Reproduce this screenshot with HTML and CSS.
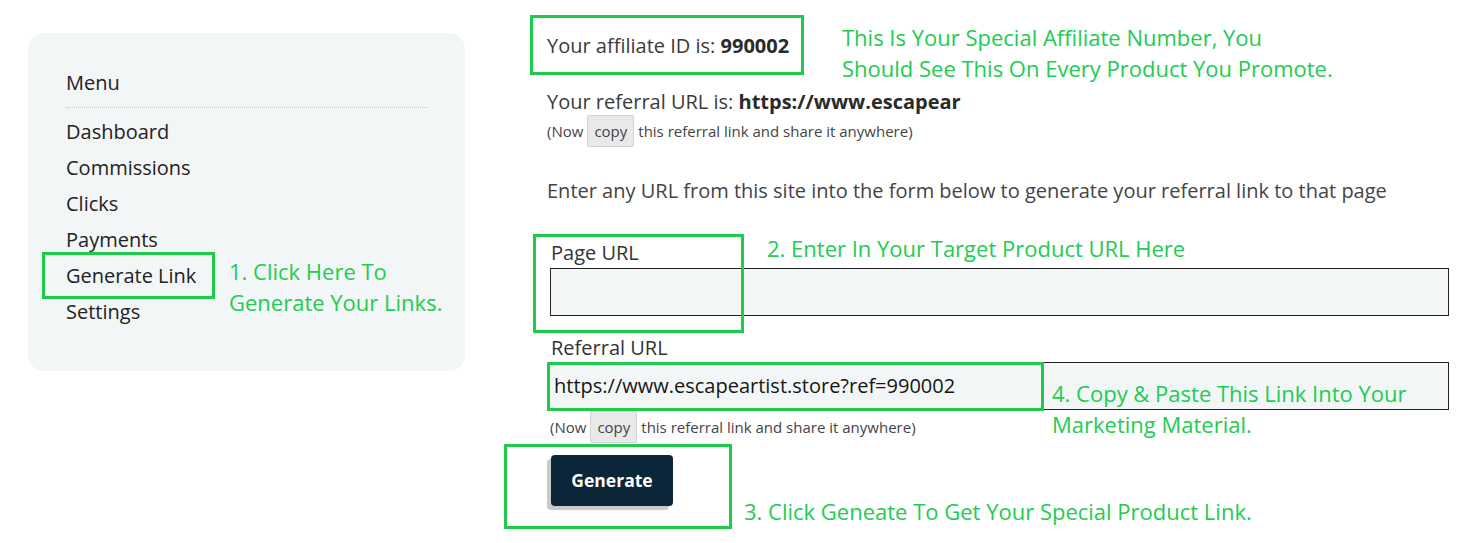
FILE: index.html
```html
<!DOCTYPE html>
<html lang="en">
<head>
<meta charset="utf-8">
<title>Affiliate Area - Generate Link</title>
<link rel="stylesheet" href="styles.css">
</head>
<body>
<div class="page">
  <aside class="sidebar">
    <div class="menu-title">Menu</div>
    <nav class="menu">
      <a class="menu-item">Dashboard</a>
      <a class="menu-item">Commissions</a>
      <a class="menu-item">Clicks</a>
      <a class="menu-item">Payments</a>
      <a class="menu-item">Generate Link</a>
      <a class="menu-item">Settings</a>
    </nav>
  </aside>

  <main class="content">
    <p class="line aff-id">Your affiliate ID is: <strong>990002</strong></p>
    <p class="line ref-url">Your referral URL is: <strong>https://www.escapear</strong></p>
    <p class="note"><span>(Now</span><button class="copy">copy</button><span>this referral link and share it anywhere)</span></p>
    <p class="line intro">Enter any URL from this site into the form below to generate your referral link to that page</p>

    <div class="field page-field">
      <label class="field-label">Page URL</label>
      <div class="input"></div>
    </div>

    <div class="field ref-field">
      <label class="field-label">Referral URL</label>
      <div class="input filled">https://www.escapeartist.store?ref=990002</div>
      <p class="note note-small"><span>(Now</span><button class="copy">copy</button><span>this referral link and share it anywhere)</span></p>
    </div>

    <button class="generate">Generate</button>
  </main>

  <div class="frame f-link"></div>
  <div class="frame f-id"></div>
  <div class="frame f-page"></div>
  <div class="frame f-ref"></div>
  <div class="frame f-gen"></div>

  <div class="ann a1">1. Click Here To<br>Generate Your Links.</div>
  <div class="ann a-top">This Is Your Special Affiliate Number, You<br>Should See This On Every Product You Promote.</div>
  <div class="ann a2">2. Enter In Your Target Product URL Here</div>
  <div class="ann a4">4. Copy &amp; Paste This Link Into Your<br>Marketing Material.</div>
  <div class="ann a3">3. Click Geneate To Get Your Special Product Link.</div>
</div>
</body>
</html>
```

FILE: styles.css
```css
* { box-sizing: border-box; }

html, body {
  margin: 0;
  padding: 0;
  background: #ffffff;
}

body {
  font-family: "Open Sans", "Noto Sans", sans-serif;
  color: #333333;
}

.page {
  position: relative;
  display: flex;
  align-items: flex-start;
  gap: 82px;
  padding: 33px 0 0 28px;
  height: 543px;
  overflow: hidden;
}

/* Sidebar */
.sidebar {
  flex: 0 0 437px;
  height: 338px;
  background: #f3f6f7;
  border-radius: 16px;
  padding: 38px 38px 0 38px;
}

.menu-title {
  font-size: 20px;
  line-height: 24px;
  color: #222;
  padding-bottom: 12px;
  border-bottom: 1px dotted #c4c4c4;
}

.menu {
  display: flex;
  flex-direction: column;
  margin-top: 6px;
}

.menu-item {
  font-size: 20px;
  line-height: 36px;
  color: #222;
  text-decoration: none;
}

/* Main content */
.content {
  flex: 0 0 902px;
  display: flex;
  flex-direction: column;
  align-items: flex-start;
  padding-top: 0;
}

.line {
  margin: 0;
  font-size: 20px;
  line-height: 27px;
  color: #3a3a3a;
}

.line strong { font-weight: 700; color: #2a2a2a; }

.aff-id { margin-top: -1px; }
.ref-url { margin-top: 29px; }

.note {
  margin: 0;
  display: flex;
  align-items: center;
  gap: 4px;
  font-size: 15px;
  height: 32px;
  color: #444;
}

.copy {
  font-family: "Open Sans", "Noto Sans", sans-serif;
  font-size: 15px;
  color: #444;
  background: #e9e9e9;
  border: 1px solid #d2d2d2;
  border-radius: 2px;
  height: 32px;
  padding: 0 6px;
  margin: 0;
}

.intro { margin-top: 30px; color: #444; }

.field {
  width: 100%;
  display: flex;
  flex-direction: column;
}

.page-field { margin-top: 35px; padding-left: 3px; }
.ref-field { margin-top: 18.5px; padding-left: 1px; }

.field-label {
  font-size: 20px;
  line-height: 27px;
  color: #333;
  padding-left: 1px;
}

.ref-field .field-label { padding-left: 3px; }

.input {
  margin-top: 1.5px;
  width: 100%;
  height: 48px;
  border: 1px solid #222;
  background: #f3f6f7;
  font-size: 20px;
  line-height: 46px;
  color: #151515;
  padding-left: 5px;
}

.ref-field .input { margin-top: 0.5px; }

.note-small { margin-top: 1px; padding-left: 2px; }

.generate {
  margin-top: 12px;
  margin-left: 4px;
  width: 122px;
  height: 51px;
  border: none;
  border-radius: 4px;
  background: #0b2539;
  color: #fff;
  font-family: "Open Sans", "Noto Sans", sans-serif;
  font-weight: 700;
  font-size: 17.5px;
  box-shadow: -4px 4px 1px #c9c9c9;
}

/* Annotation overlays */
.frame {
  position: absolute;
  border: 3px solid #1ecb4b;
  pointer-events: none;
}

.f-link { left: 42px;  top: 252px; width: 173px; height: 47px; }
.f-id   { left: 530px; top: 15px;  width: 274px; height: 60px; }
.f-page { left: 533px; top: 234px; width: 211px; height: 99px; }
.f-ref  { left: 547px; top: 362px; width: 497px; height: 49px; }
.f-gen  { left: 504px; top: 444px; width: 228px; height: 85px; }

.ann {
  position: absolute;
  font-family: "Open Sans", "Noto Sans", sans-serif;
  color: #22cc50;
  font-size: 22px;
  line-height: 31px;
  white-space: nowrap;
}

.a1    { left: 229px; top: 256px; }
.a-top { left: 842px; top: 22px; }
.a2    { left: 767px; top: 233px; }
.a4    { left: 1052px; top: 378px; }
.a3    { left: 744px; top: 496px; }
```
